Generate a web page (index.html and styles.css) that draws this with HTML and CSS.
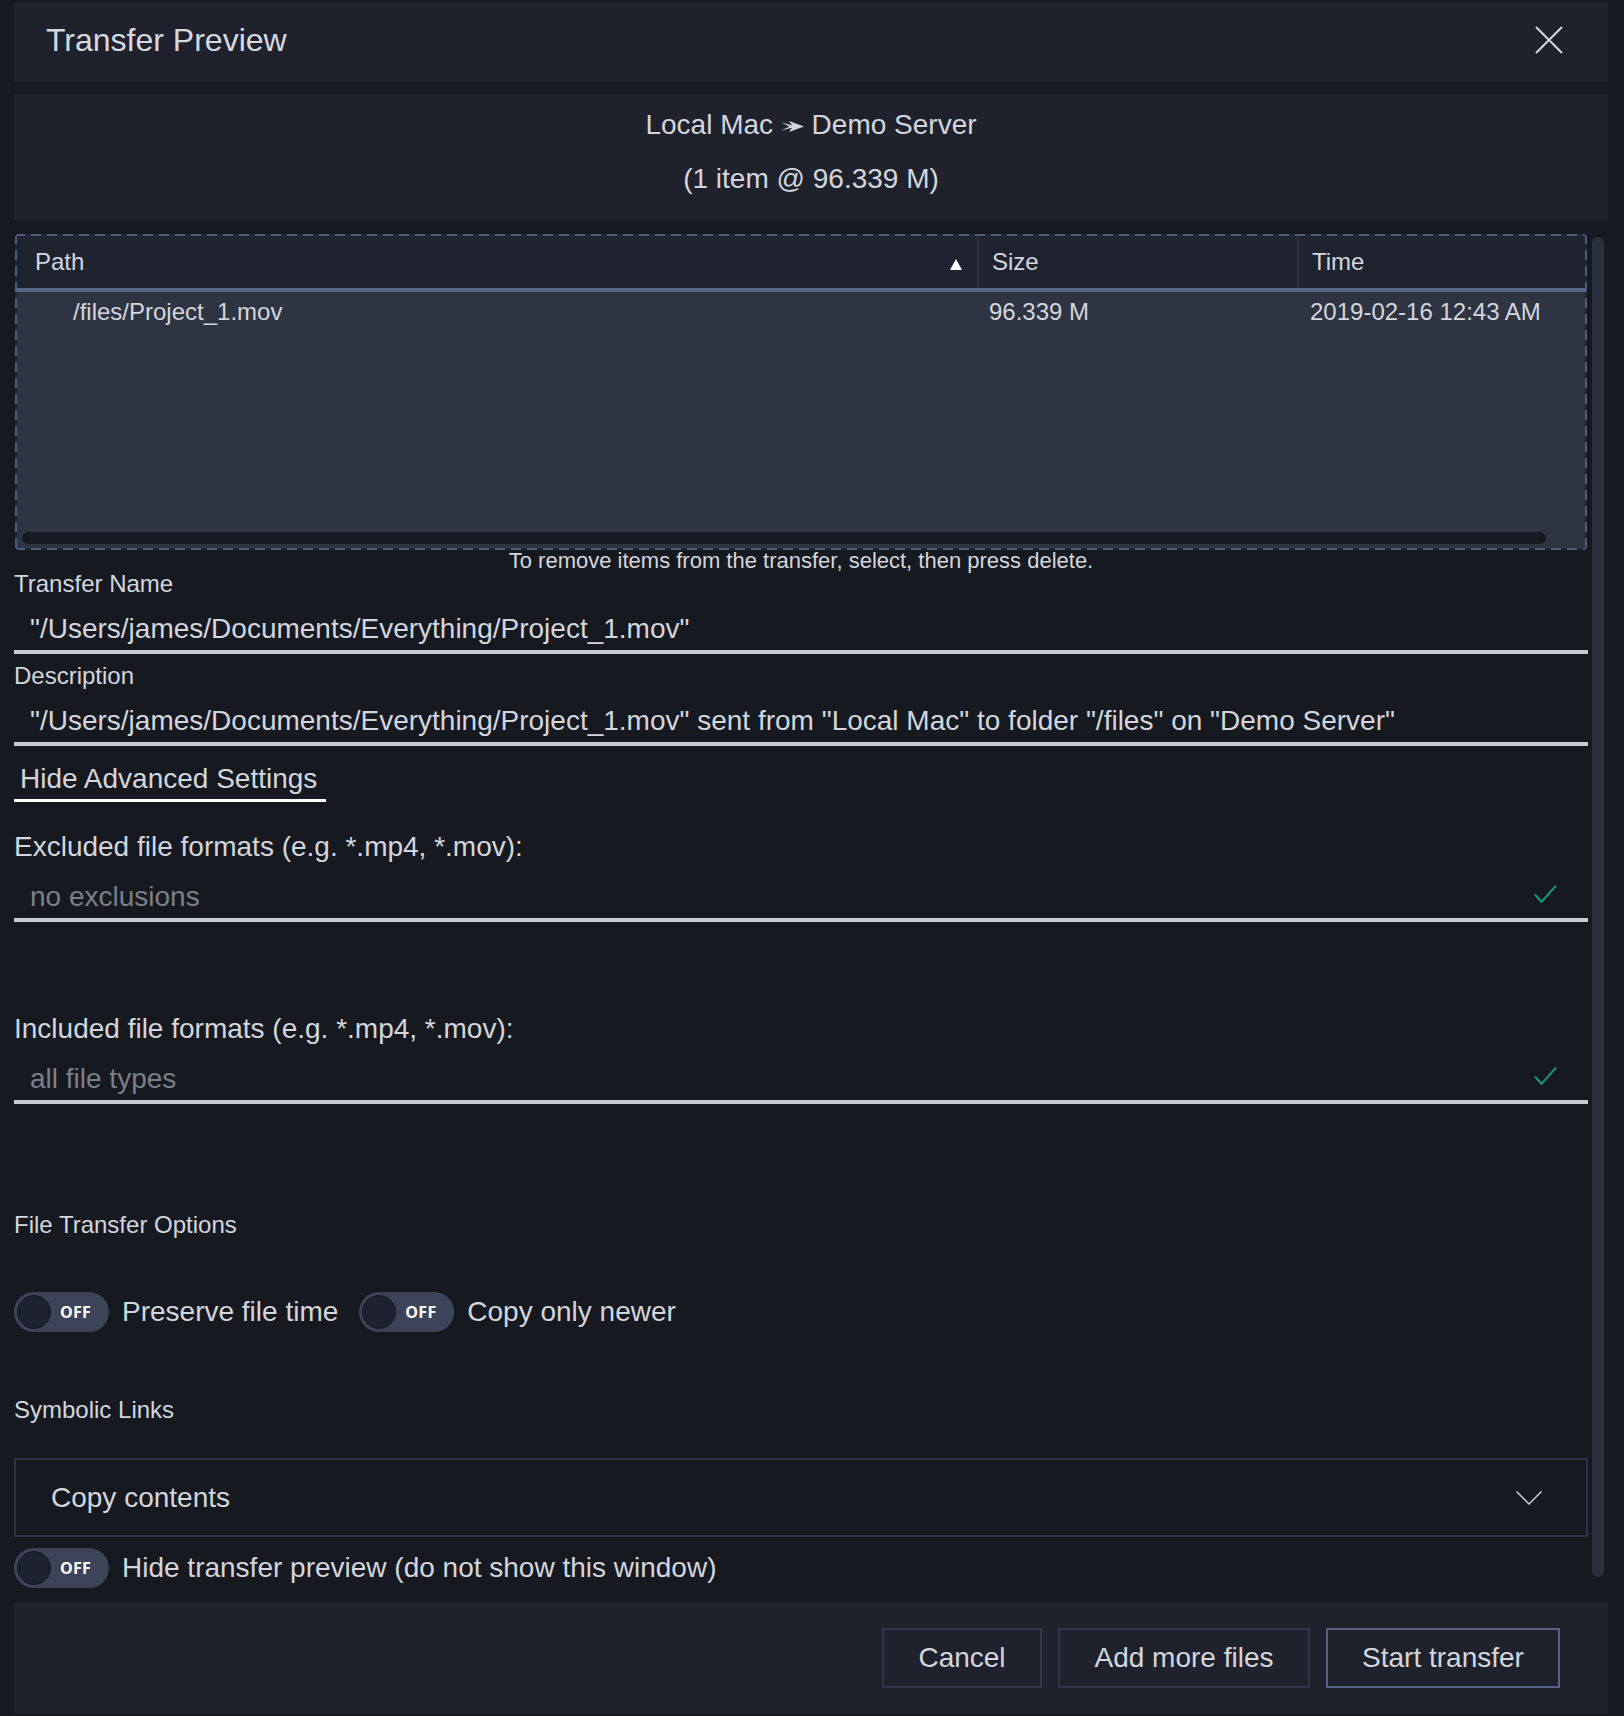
FILE: index.html
```html
<!DOCTYPE html>
<html lang="en">
<head>
<meta charset="utf-8">
<title>Transfer Preview</title>
<link rel="stylesheet" href="styles.css">
</head>
<body>
<div class="dialog">
  <div class="header">
    <div class="title">Transfer Preview</div>
    <svg class="close" width="28" height="28" viewBox="0 0 28 28"><path d="M1 1 L27 27 M27 1 L1 27" stroke="#d3d6de" stroke-width="2" fill="none"/></svg>
  </div>

  <div class="route">
    <div>Local Mac <svg class="arrow" width="23" height="11" viewBox="0 0 23 11"><path d="M0 1.5 L11 4.3 L8 0 L23 5.5 L8 11 L11 6.7 L0 9.5 L8.5 5.5 Z" fill="#d3d6de"/></svg> Demo Server</div>
    <div>(1 item @ 96.339 M)</div>
  </div>

  <div class="main">
    <div class="content">
      <div class="table-box">
        <div class="thead">
          <div class="th th-path"><span>Path</span><span class="sort"></span></div>
          <div class="th th-size">Size</div>
          <div class="th th-time">Time</div>
        </div>
        <div class="tbody">
          <div class="tr">
            <div class="td td-path">/files/Project_1.mov</div>
            <div class="td td-size">96.339 M</div>
            <div class="td td-time">2019-02-16 12:43 AM</div>
          </div>
          <div class="hscroll"></div>
        </div>
      </div>
      <div class="hint">To remove items from the transfer, select, then press delete.</div>

      <div class="label">Transfer Name</div>
      <div class="field">"/Users/james/Documents/Everything/Project_1.mov"</div>

      <div class="label label-desc">Description</div>
      <div class="field">"/Users/james/Documents/Everything/Project_1.mov" sent from "Local Mac" to folder "/files" on "Demo Server"</div>

      <div class="adv">Hide Advanced Settings</div>

      <div class="big-label excl">Excluded file formats (e.g. *.mp4, *.mov):</div>
      <div class="field field-check">
        <span class="placeholder">no exclusions</span>
        <svg class="check" width="23" height="18" viewBox="0 0 23 18"><path d="M1 9.5 L7.5 17 L22 0.5" stroke="#17957d" stroke-width="2" fill="none"/></svg>
      </div>

      <div class="big-label incl">Included file formats (e.g. *.mp4, *.mov):</div>
      <div class="field field-check">
        <span class="placeholder">all file types</span>
        <svg class="check" width="23" height="18" viewBox="0 0 23 18"><path d="M1 9.5 L7.5 17 L22 0.5" stroke="#17957d" stroke-width="2" fill="none"/></svg>
      </div>

      <div class="label opts">File Transfer Options</div>
      <div class="toggles">
        <div class="opt"><div class="toggle"><span class="knob"></span><span class="off">OFF</span></div><span class="opt-label">Preserve file time</span></div>
        <div class="opt"><div class="toggle"><span class="knob"></span><span class="off">OFF</span></div><span class="opt-label">Copy only newer</span></div>
      </div>

      <div class="label sym">Symbolic Links</div>
      <div class="select">
        <span>Copy contents</span>
        <svg class="chev" width="26" height="14" viewBox="0 0 26 14"><path d="M0.5 0.5 L13 13 L25.5 0.5" stroke="#c9ccd6" stroke-width="1.5" fill="none"/></svg>
      </div>

      <div class="toggles hide-row">
        <div class="opt"><div class="toggle"><span class="knob"></span><span class="off">OFF</span></div><span class="opt-label">Hide transfer preview (do not show this window)</span></div>
      </div>
    </div>
    <div class="vscroll"></div>
  </div>

  <div class="footer">
    <button class="btn btn-cancel">Cancel</button>
    <button class="btn btn-add">Add more files</button>
    <button class="btn btn-start">Start transfer</button>
  </div>
</div>
</body>
</html>
```

FILE: styles.css
```css
html, body {
  margin: 0;
  padding: 0;
}

body {
  background: #16191f;
  color: #d3d6de;
  font-family: "Liberation Sans", Arial, Helvetica, sans-serif;
  width: 1624px;
  height: 1716px;
  overflow: hidden;
}

.dialog {
  padding: 2px 16px 0 14px;
}

.header {
  height: 80px;
  box-sizing: border-box;
  background: #1f222c;
  display: flex;
  align-items: center;
  justify-content: space-between;
  padding: 0 45px 4px 32px;
}

.title {
  font-size: 32px;
  color: #d6d9e1;
}

.close {
  display: block;
}

.route {
  margin-top: 12px;
  height: 126px;
  box-sizing: border-box;
  padding-top: 4px;
  background: #1f222c;
  text-align: center;
  font-size: 28px;
  line-height: 54px;
}

.arrow {
  vertical-align: 2px;
}

.main {
  display: flex;
  margin-top: 12px;
  padding-bottom: 14px;
}

.content {
  width: 1574px;
}

.vscroll {
  width: 12px;
  margin-left: 4px;
  margin-top: 5px;
  margin-bottom: 11px;
  background: #2a303d;
  border-radius: 6px;
}

/* table */
.table-box {
  margin: 2px 0 0 1px;
  width: 1572px;
  height: 316px;
  box-sizing: border-box;
  padding: 2px;
  border-radius: 4px;
  overflow: hidden;
  background:
    repeating-linear-gradient(90deg, #4f5b7a 0 10px, transparent 10px 16px) left top / 100% 2px no-repeat,
    repeating-linear-gradient(90deg, #4f5b7a 0 10px, transparent 10px 16px) left bottom / 100% 2px no-repeat,
    repeating-linear-gradient(180deg, #4f5b7a 0 10px, transparent 10px 16px) left top / 2px 100% no-repeat,
    repeating-linear-gradient(180deg, #4f5b7a 0 10px, transparent 10px 16px) right top / 2px 100% no-repeat,
    #222633;
  display: flex;
  flex-direction: column;
}

.thead {
  display: flex;
  height: 56px;
  box-sizing: border-box;
  background: #1f2330;
  border-bottom: 4px solid #58658a;
}

.th {
  font-size: 24px;
  display: flex;
  align-items: center;
  box-sizing: border-box;
}

.th-path {
  width: 960px;
  padding: 0 15px 0 18px;
  justify-content: space-between;
}

.th-size {
  width: 320px;
  padding-left: 13px;
  border-left: 2px solid #2d3343;
}

.th-time {
  flex: 1;
  padding-left: 13px;
  border-left: 2px solid #2d3343;
}

.sort {
  width: 0;
  height: 0;
  border-left: 6px solid transparent;
  border-right: 6px solid transparent;
  border-bottom: 11px solid #ffffff;
  margin-top: 4px;
}

.tbody {
  flex: 1;
  background: #2e3441;
}

.tr {
  display: flex;
  height: 40px;
  align-items: center;
  font-size: 24px;
}

.td {
  box-sizing: border-box;
}

.td-path {
  width: 960px;
  padding-left: 56px;
}

.td-size {
  width: 320px;
  padding-left: 12px;
}

.td-time {
  flex: 1;
  padding-left: 13px;
}

.hscroll {
  margin: 200px 0 0 5px;
  width: 1524px;
  height: 12px;
  border-radius: 6px;
  background: #171a21;
}

.hint {
  text-align: center;
  font-size: 22px;
  line-height: 22px;
  height: 22px;
}

/* form */
.label {
  font-size: 24px;
  line-height: 24px;
}

.label-desc {
  margin-top: 10px;
}

.field {
  border-bottom: 4px solid #c6cad5;
  padding: 16px 16px 4px;
  font-size: 28px;
  line-height: 34px;
  white-space: nowrap;
}

.adv {
  margin-top: 16px;
  width: 312px;
  box-sizing: border-box;
  padding: 0 6px 3px;
  border-bottom: 3px solid #ffffff;
  font-size: 28px;
  line-height: 34px;
}

.big-label {
  font-size: 28px;
  line-height: 34px;
}

.excl {
  margin-top: 28px;
}

.incl {
  margin-top: 90px;
}

.field-check {
  display: flex;
  align-items: center;
  justify-content: space-between;
  padding-right: 31px;
}

.placeholder {
  color: #7b7f89;
}

.check {
  display: block;
  margin-top: -6px;
}

.opts {
  margin-top: 109px;
}

.toggles {
  margin-top: 55px;
  display: flex;
  align-items: center;
  gap: 21px;
  height: 40px;
}

.opt {
  display: flex;
  align-items: center;
}

.toggle {
  width: 95px;
  height: 40px;
  border-radius: 20px;
  background: #3c4459;
  display: flex;
  align-items: center;
  box-sizing: border-box;
}

.knob {
  width: 34px;
  height: 34px;
  border-radius: 50%;
  background: #1e2230;
  margin-left: 3px;
  box-sizing: border-box;
  border: 1px solid #171a24;
}

.off {
  margin-left: 9px;
  font-family: "Open Sans", "DejaVu Sans", sans-serif;
  font-weight: 700;
  font-size: 16px;
  color: #ffffff;
  letter-spacing: 0.3px;
}

.opt-label {
  margin-left: 13px;
  font-size: 28px;
}

.sym {
  margin-top: 66px;
}

.select {
  margin-top: 36px;
  height: 79px;
  box-sizing: border-box;
  border: 2px solid #2d3343;
  display: flex;
  align-items: center;
  justify-content: space-between;
  padding: 0 44px 0 35px;
  font-size: 28px;
}

.chev {
  display: block;
}

.hide-row {
  margin-top: 11px;
}

/* footer */
.footer {
  height: 112px;
  box-sizing: border-box;
  background: #1f222c;
  display: flex;
  justify-content: flex-end;
  align-items: flex-start;
  gap: 16px;
  padding: 26px 48px 0 0;
}

.btn {
  height: 60px;
  box-sizing: border-box;
  background: transparent;
  border: 2px solid #303648;
  color: #d3d6de;
  font-family: "Liberation Sans", Arial, Helvetica, sans-serif;
  font-size: 28px;
  padding: 0;
}

.btn-cancel {
  width: 160px;
}

.btn-add {
  width: 252px;
}

.btn-start {
  width: 234px;
  border-color: #566384;
}
```
